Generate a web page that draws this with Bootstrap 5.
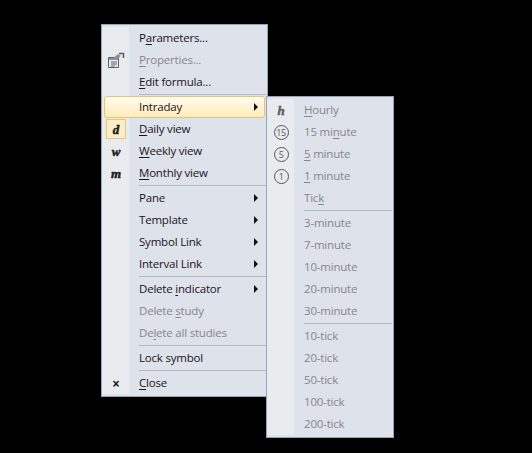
<!DOCTYPE html>
<html lang="en">
<head>
<meta charset="utf-8">
<title>Menu</title>
<link href="https://cdn.jsdelivr.net/npm/bootstrap@5.3.0/dist/css/bootstrap.min.css" rel="stylesheet">
<style>
html,body{background:#000;margin:0;width:532px;height:453px;overflow:hidden}
.popmenu{position:absolute;padding:2px 0;border:1px solid #98a3b6;background:linear-gradient(#e8ecef,#e8ecef) 0 2px/27px calc(100% - 4px) no-repeat,#dee2ea;font:11.5px/22px "Open Sans","Noto Sans",sans-serif;color:#1a1420}
.main-menu{left:101px;top:24px;width:167px;height:373px}
.sub-menu{left:266px;top:96px;width:128px;height:342px;color:#86868c}
.mi{display:flex;align-items:center;height:22px;position:relative;white-space:nowrap;padding-left:37px;letter-spacing:-.2px}
.mi.off{color:#86868c}
.mi u{text-underline-offset:2px;text-decoration-thickness:1px}
.ico{position:absolute;left:4px;top:1px;width:20px;height:20px;display:flex;align-items:center;justify-content:center}
.ico.on{background:#fdeec8;border:1px solid #eac670}
.vw{font:italic bold 13px/1 "Liberation Serif",serif;color:#1c1c1c;-webkit-text-stroke:.5px currentColor}
.sub-menu .vw{color:#5f5f66}
.arr{position:absolute;right:9px;top:7px;width:0;height:0;border-left:4px solid #111;border-top:4px solid transparent;border-bottom:4px solid transparent}
.sep{height:3px;margin-left:37px;margin-right:1px;padding-top:1px}
.sep::before{content:"";display:block;height:1px;background:#b2b8c4}
.hot{position:absolute;left:2px;right:2px;top:0;height:22px;border:1px solid #ecc46a;border-radius:3px;background:linear-gradient(to bottom,#fffcf2,#fff2cf 55%,#ffecbd)}
.lbl{position:relative}
.ring{width:15px;height:15px;flex:none;border:1px solid #55555c;border-radius:50%;font:9px/13px "Open Sans",sans-serif;color:#55555c;text-align:center;letter-spacing:-.5px}
.xx{font:bold 12px/1 "Liberation Sans",sans-serif;color:#111;position:relative;top:1px}
</style>
</head>
<body>
<div class="popmenu main-menu">
  <div class="mi"><span class="lbl">P<u>a</u>rameters...</span></div>
  <div class="mi off"><span class="ico"><svg width="20" height="20" viewBox="0 0 20 20"><path d="M2.500 7.500h10v10h-10z" fill="#e8ecef" stroke="#5c636e"/><path d="M3 8h9v2H3z" fill="#8b929c"/><path d="M5 12h6M5 14h6M5 16h4" stroke="#5c636e"/><path d="M6 9l6-5 3 2-4 3z" fill="#8b929c"/><path d="M13 3.500h5M17.500 3v5" stroke="#565d68" stroke-width="1.500"/></svg></span><span class="lbl"><u>P</u>roperties...</span></div>
  <div class="mi"><span class="lbl"><u>E</u>dit formula...</span></div>
  <div class="sep"></div>
  <div class="mi"><span class="hot"></span><span class="lbl">Intraday</span><span class="arr"></span></div>
  <div class="mi"><span class="ico on"><span class="vw">d</span></span><span class="lbl"><u>D</u>aily view</span></div>
  <div class="mi"><span class="ico"><span class="vw">w</span></span><span class="lbl"><u>W</u>eekly view</span></div>
  <div class="mi"><span class="ico"><span class="vw">m</span></span><span class="lbl"><u>M</u>onthly view</span></div>
  <div class="sep"></div>
  <div class="mi"><span class="lbl">Pane</span><span class="arr"></span></div>
  <div class="mi"><span class="lbl">Template</span><span class="arr"></span></div>
  <div class="mi"><span class="lbl">Symbol Link</span><span class="arr"></span></div>
  <div class="mi"><span class="lbl">Interval Link</span><span class="arr"></span></div>
  <div class="sep"></div>
  <div class="mi"><span class="lbl">Delete <u>i</u>ndicator</span><span class="arr"></span></div>
  <div class="mi off"><span class="lbl">Delete <u>s</u>tudy</span></div>
  <div class="mi off"><span class="lbl">De<u>l</u>ete all studies</span></div>
  <div class="sep"></div>
  <div class="mi"><span class="lbl">Lock symbol</span></div>
  <div class="sep"></div>
  <div class="mi"><span class="ico"><span class="xx">×</span></span><span class="lbl"><u>C</u>lose</span></div>
</div>
<div class="popmenu sub-menu">
  <div class="mi"><span class="ico"><span class="vw">h</span></span><span class="lbl"><u>H</u>ourly</span></div>
  <div class="mi"><span class="ico"><span class="ring">15</span></span><span class="lbl">15 mi<u>n</u>ute</span></div>
  <div class="mi"><span class="ico"><span class="ring">5</span></span><span class="lbl"><u>5</u> minute</span></div>
  <div class="mi"><span class="ico"><span class="ring">1</span></span><span class="lbl"><u>1</u> minute</span></div>
  <div class="mi"><span class="lbl">Tic<u>k</u></span></div>
  <div class="sep"></div>
  <div class="mi"><span class="lbl">3-minute</span></div>
  <div class="mi"><span class="lbl">7-minute</span></div>
  <div class="mi"><span class="lbl">10-minute</span></div>
  <div class="mi"><span class="lbl">20-minute</span></div>
  <div class="mi"><span class="lbl">30-minute</span></div>
  <div class="sep"></div>
  <div class="mi"><span class="lbl">10-tick</span></div>
  <div class="mi"><span class="lbl">20-tick</span></div>
  <div class="mi"><span class="lbl">50-tick</span></div>
  <div class="mi"><span class="lbl">100-tick</span></div>
  <div class="mi"><span class="lbl">200-tick</span></div>
</div>
<script src="https://cdn.jsdelivr.net/npm/bootstrap@5.3.0/dist/js/bootstrap.bundle.min.js"></script>
</body>
</html>
